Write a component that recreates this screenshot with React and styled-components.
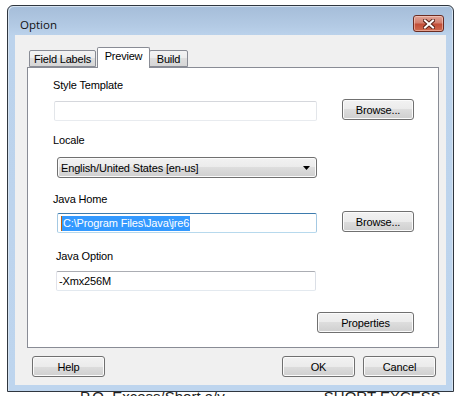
import React from 'react';
import styled, { createGlobalStyle } from 'styled-components';

const GlobalStyle = createGlobalStyle`
    html, body {
        margin: 0;
        padding: 0;
        height: 396px;
        overflow: hidden;
        background: #fff;
    }
    body {
        font-family: 'Liberation Sans', Arial, sans-serif;
        font-size: 11px;
        color: #000;
    }
`;

const CloseIcon = () => (
    <svg width="12" height="10" viewBox="0 0 12 10">
        <path d="M2 1.5 L10 8.5 M10 1.5 L2 8.5" stroke="#5a2318" strokeWidth="4" strokeLinecap="square" />
        <path d="M2 1.5 L10 8.5 M10 1.5 L2 8.5" stroke="#fff" strokeWidth="2" strokeLinecap="square" />
    </svg>
);

const Arrow = () => (
    <svg width="7" height="4" viewBox="0 0 7 4">
        <path d="M0 0 H7 L3.5 4 Z" fill="#000" />
    </svg>
);

const App = () => {
    return (
        <>
            <GlobalStyle />
            <Page>
                <Window>
                    <TitleBar>
                        <Title>Option</Title>
                        <CloseButton><CloseIcon /></CloseButton>
                    </TitleBar>
                    <Client>
                        <TabStrip>
                            <Tab width={67}>Field Labels</Tab>
                            <Tab width={53} active>Preview</Tab>
                            <Tab width={39} shift>Build</Tab>
                        </TabStrip>
                        <Panel>
                            <Label>Style Template</Label>
                            <Row gap={7}>
                                <Field indent={1} width={263} />
                                <Button width={72}>Browse...</Button>
                            </Row>

                            <Label top={12}>Locale</Label>
                            <Row gap={10}>
                                <Select>
                                    <span>English/United States [en-us]</span>
                                    <Arrow />
                                </Select>
                            </Row>

                            <Label top={14}>Java Home</Label>
                            <Row gap={5}>
                                <Field indent={4} width={260} focused>
                                    <Selected>C:\Program Files\Java\jre6</Selected>
                                </Field>
                                <Button width={72}>Browse...</Button>
                            </Row>

                            <Label top={16} indent={3}>Java Option</Label>
                            <Row gap={6}>
                                <Field indent={3} width={260} flat>-Xmx256M</Field>
                            </Row>

                            <Row gap={21} end>
                                <Button width={97}>Properties</Button>
                            </Row>
                        </Panel>
                        <ButtonBar>
                            <Button width={73}>Help</Button>
                            <Group>
                                <Button width={73}>OK</Button>
                                <Button width={73}>Cancel</Button>
                            </Group>
                        </ButtonBar>
                    </Client>
                </Window>
                <Backdrop>
                    <BackText left={73}>P.O. Excess/Short a/v.</BackText>
                    <BackText left={96}>SHORT EXCESS</BackText>
                </Backdrop>
            </Page>
        </>
    );
};

const Page = styled.div`
    padding: 5px 0 0 7px;
`;

const Window = styled.div`
    position: relative;
    z-index: 1;
    box-sizing: border-box;
    width: 447px;
    height: 387px;
    display: flex;
    flex-direction: column;
    padding: 0 7px 6px 7px;
    border: 1px solid #2f363f;
    border-radius: 6px 6px 0 0;
    background: linear-gradient(#a5bdd9 0px, #b3cae4 20px, #bcd3ec 30px, #bed5ee 100%);
    box-shadow: inset 1px 1px 0 #d6e3f1, inset -1px 0 0 #d6e3f1;
`;

const TitleBar = styled.div`
    height: 29px;
    display: flex;
    align-items: flex-end;
    justify-content: space-between;
    padding: 0 2px 3px 5px;
`;

const Title = styled.div`
    font-family: 'Open Sans', 'Noto Sans', sans-serif;
    font-size: 11.5px;
    line-height: 14px;
    color: #111;
`;

const CloseButton = styled.div`
    box-sizing: border-box;
    width: 31px;
    height: 17px;
    display: flex;
    align-items: center;
    justify-content: center;
    border: 1px solid #6b2c22;
    border-radius: 3px;
    background: linear-gradient(#e0a497 0%, #d3806f 45%, #c24d37 55%, #cf6b4f 100%);
    box-shadow: inset 0 0 0 1px rgba(255, 220, 210, 0.5);
`;

const Client = styled.div`
    flex: 1;
    box-sizing: border-box;
    display: flex;
    flex-direction: column;
    padding: 12px 6px 8px 12px;
    background: #f0f0f0;
`;

const TabStrip = styled.div`
    height: 20px;
    display: flex;
    align-items: flex-end;
    padding-left: 2px;
`;

const Tab = styled.div`
    position: relative;
    z-index: ${(p) => (p.active ? 2 : 1)};
    box-sizing: border-box;
    width: ${(p) => p.width}px;
    height: ${(p) => (p.active ? 21 : 17)}px;
    margin-bottom: ${(p) => (p.active ? -1 : 0)}px;
    margin-left: ${(p) => (p.shift ? -1 : p.active ? 1 : 0)}px;
    padding-top: 2px;
    border: 1px solid #898c95;
    border-bottom: ${(p) => (p.active ? 'none' : '1px solid #898c95')};
    border-radius: 2px 2px 0 0;
    background: ${(p) => (p.active ? '#fff' : 'linear-gradient(#f3f3f3, #ececec 50%, #dedede 50%, #d6d6d6)')};
    text-align: center;
    line-height: 13px;
    letter-spacing: -0.2px;
`;

const Panel = styled.div`
    box-sizing: border-box;
    width: 412px;
    height: 281px;
    padding: 10px 24px 0 25px;
    border: 1px solid #898c95;
    background: #fff;
`;

const Label = styled.div`
    height: 14px;
    line-height: 14px;
    margin-top: ${(p) => p.top || 0}px;
    padding-left: ${(p) => p.indent || 0}px;
    letter-spacing: -0.15px;
`;

const Row = styled.div`
    display: flex;
    align-items: flex-start;
    justify-content: ${(p) => (p.end ? 'flex-end' : 'space-between')};
    margin-top: ${(p) => p.gap}px;
`;

const Field = styled.div`
    box-sizing: border-box;
    width: ${(p) => p.width}px;
    height: 20px;
    margin: 2px 0 0 ${(p) => p.indent}px;
    padding: 0 2px;
    border: 1px solid;
    border-color: ${(p) =>
        p.focused
            ? '#3d7bad #a4c9e3 #b7d9ed #a4c9e3'
            : p.flat
            ? '#abadb3 #dbdfe6 #e3e9ef #e2e3ea'
            : '#d5d7dc #e3e6ea #e8ebef #e3e6ea'};
    border-radius: 2px;
    background: #fff;
    line-height: 18px;
    white-space: nowrap;
    letter-spacing: -0.15px;
`;

const Selected = styled.span`
    display: inline-block;
    margin-left: 1px;
    padding: 0 1px;
    line-height: 15px;
    background: #3399ff;
    color: #fff;
    border-left: 1px solid #c0600a;
`;

const Select = styled.div`
    box-sizing: border-box;
    width: 260px;
    height: 21px;
    margin-left: 4px;
    display: flex;
    align-items: center;
    justify-content: space-between;
    padding: 0 6px 0 3px;
    border: 1px solid #707070;
    border-radius: 3px;
    background: linear-gradient(#f2f2f2 0%, #ebebeb 50%, #dddddd 50%, #cfcfcf 100%);
    box-shadow: inset 0 0 0 1px #fbfbfb;
    letter-spacing: -0.15px;
`;

const Button = styled.div`
    box-sizing: border-box;
    width: ${(p) => p.width}px;
    height: 21px;
    display: flex;
    align-items: center;
    justify-content: center;
    border: 1px solid #707070;
    border-radius: 3px;
    background: linear-gradient(#f2f2f2 0%, #ebebeb 50%, #dddddd 50%, #cfcfcf 100%);
    box-shadow: inset 0 0 0 1px #fbfbfb;
    letter-spacing: -0.15px;
`;

const ButtonBar = styled.div`
    display: flex;
    justify-content: space-between;
    margin-top: 8px;
    padding: 0 4px 0 5px;
`;

const Group = styled.div`
    display: flex;
    gap: 8px;
`;

const Backdrop = styled.div`
    display: flex;
    margin-top: -3px;
    font-size: 15px;
    line-height: 16px;
    color: #222;
    white-space: nowrap;
`;

const BackText = styled.div`
    margin-left: ${(p) => p.left}px;
`;

export default App;
